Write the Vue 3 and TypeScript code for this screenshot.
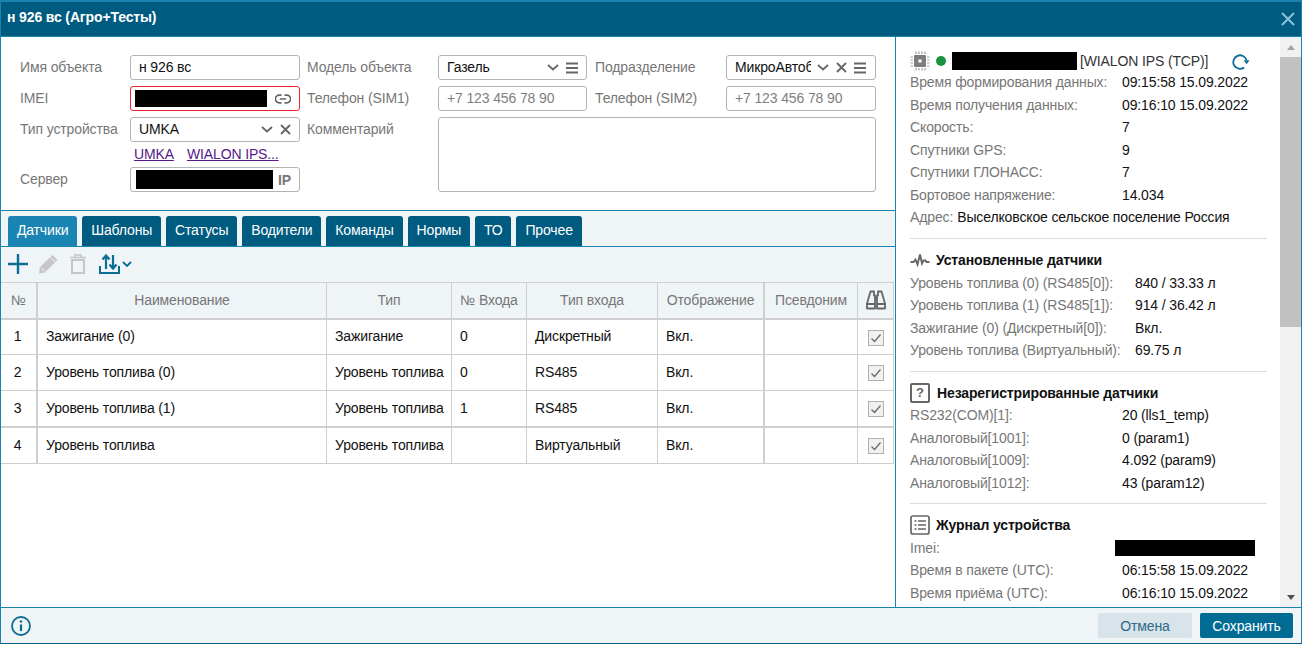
<script setup lang="ts">
interface SensorRow {
  id: number
  name: string
  type: string
  input: string
  inputType: string
  display: string
}

interface InfoRow {
  label: string
  value: string
}

const tabs = ['Датчики', 'Шаблоны', 'Статусы', 'Водители', 'Команды', 'Нормы', 'ТО', 'Прочее']

const columns = ['№', 'Наименование', 'Тип', '№ Входа', 'Тип входа', 'Отображение', 'Псевдоним']

const sensors: SensorRow[] = [
  { id: 1, name: 'Зажигание (0)', type: 'Зажигание', input: '0', inputType: 'Дискретный', display: 'Вкл.' },
  { id: 2, name: 'Уровень топлива (0)', type: 'Уровень топлива', input: '0', inputType: 'RS485', display: 'Вкл.' },
  { id: 3, name: 'Уровень топлива (1)', type: 'Уровень топлива', input: '1', inputType: 'RS485', display: 'Вкл.' },
  { id: 4, name: 'Уровень топлива', type: 'Уровень топлива', input: '', inputType: 'Виртуальный', display: 'Вкл.' }
]

const deviceRows: InfoRow[] = [
  { label: 'Время формирования данных:', value: '09:15:58 15.09.2022' },
  { label: 'Время получения данных:', value: '09:16:10 15.09.2022' },
  { label: 'Скорость:', value: '7' },
  { label: 'Спутники GPS:', value: '9' },
  { label: 'Спутники ГЛОНАСС:', value: '7' },
  { label: 'Бортовое напряжение:', value: '14.034' }
]

const installedRows: InfoRow[] = [
  { label: 'Уровень топлива (0) (RS485[0]):', value: '840 / 33.33 л' },
  { label: 'Уровень топлива (1) (RS485[1]):', value: '914 / 36.42 л' },
  { label: 'Зажигание (0) (Дискретный[0]):', value: 'Вкл.' },
  { label: 'Уровень топлива (Виртуальный):', value: '69.75 л' }
]

const unknownRows: InfoRow[] = [
  { label: 'RS232(COM)[1]:', value: '20 (lls1_temp)' },
  { label: 'Аналоговый[1001]:', value: '0 (param1)' },
  { label: 'Аналоговый[1009]:', value: '4.092 (param9)' },
  { label: 'Аналоговый[1012]:', value: '43 (param12)' }
]

const logRows: InfoRow[] = [
  { label: 'Время в пакете (UTC):', value: '06:15:58 15.09.2022' },
  { label: 'Время приёма (UTC):', value: '06:16:10 15.09.2022' }
]
</script>

<template>
  <div class="window">
    <header class="title-bar">
      <span class="title">н 926 вс (Агро+Тесты)</span>
      <svg class="close" width="14" height="14" viewBox="0 0 14 14">
        <path d="M1 1l12 12M13 1L1 13" stroke="#8cc3d8" stroke-width="2" fill="none" />
      </svg>
    </header>

    <div class="body">
      <main class="main">
        <section class="form">
          <label class="lbl">Имя объекта</label>
          <input class="field" value="н 926 вс" readonly />
          <label class="lbl lbl-mid">Модель объекта</label>
          <div class="field box">
            <span class="box-text">Газель</span>
            <svg class="ic-chevron" width="12" height="7" viewBox="0 0 12 7"><path d="M1 1l5 4.5L11 1" stroke="#666" stroke-width="1.8" fill="none" /></svg>
            <svg class="ic-menu" width="12" height="12" viewBox="0 0 12 12"><path d="M0 1.5h12M0 6h12M0 10.5h12" stroke="#666" stroke-width="2" /></svg>
          </div>
          <label class="lbl lbl-right">Подразделение</label>
          <div class="field box">
            <span class="box-text box-clip">МикроАвтоб</span>
            <svg class="ic-chevron" width="12" height="7" viewBox="0 0 12 7"><path d="M1 1l5 4.5L11 1" stroke="#666" stroke-width="1.8" fill="none" /></svg>
            <svg class="ic-x" width="11" height="11" viewBox="0 0 11 11"><path d="M1 1l9 9M10 1l-9 9" stroke="#666" stroke-width="1.8" fill="none" /></svg>
            <svg class="ic-menu" width="12" height="12" viewBox="0 0 12 12"><path d="M0 1.5h12M0 6h12M0 10.5h12" stroke="#666" stroke-width="2" /></svg>
          </div>

          <label class="lbl">IMEI</label>
          <div class="field box box-error">
            <span class="redact redact-imei"></span>
            <svg class="ic-link" width="16" height="10" viewBox="0 0 16 10">
              <path d="M6.5 1.2H4.2a3.8 3.8 0 0 0 0 7.6h2.3M9.5 1.2h2.3a3.8 3.8 0 0 1 0 7.6H9.5M4.8 5h6.4" stroke="#666" stroke-width="1.7" fill="none" />
            </svg>
          </div>
          <label class="lbl lbl-mid">Телефон (SIM1)</label>
          <input class="field" placeholder="+7 123 456 78 90" />
          <label class="lbl lbl-right">Телефон (SIM2)</label>
          <input class="field" placeholder="+7 123 456 78 90" />

          <label class="lbl">Тип устройства</label>
          <div class="field box">
            <span class="box-text">UMKA</span>
            <svg class="ic-chevron" width="12" height="7" viewBox="0 0 12 7"><path d="M1 1l5 4.5L11 1" stroke="#666" stroke-width="1.8" fill="none" /></svg>
            <svg class="ic-x" width="11" height="11" viewBox="0 0 11 11"><path d="M1 1l9 9M10 1l-9 9" stroke="#666" stroke-width="1.8" fill="none" /></svg>
          </div>
          <label class="lbl lbl-mid">Комментарий</label>
          <textarea class="field comment"></textarea>

          <div class="links">
            <a href="#umka">UMKA</a>
            <a href="#wialon">WIALON IPS...</a>
          </div>

          <label class="lbl lbl-server">Сервер</label>
          <div class="field box box-server">
            <span class="redact redact-server"></span>
            <span class="ip">IP</span>
          </div>
        </section>

        <nav class="tabs">
          <span v-for="(tab, i) in tabs" :key="tab" class="tab" :class="{ active: i === 0 }">{{ tab }}</span>
        </nav>

        <div class="toolbar">
          <svg class="tool-plus" width="20" height="20" viewBox="0 0 20 20"><path d="M10 0v20M0 10h20" stroke="#0b6c94" stroke-width="2.4" /></svg>
          <svg class="tool-edit" width="20" height="20" viewBox="0 0 20 20">
            <path d="M14.5 1L19.5 6 7 18.5 1 19.5 2 13z" fill="#c6c6c6" />
            <path d="M12.5 3.5l4.5 4.5M3 13.5l4 4" stroke="#eff4f7" stroke-width="1" fill="none" />
          </svg>
          <svg class="tool-trash" width="16" height="20" viewBox="0 0 16 20">
            <path d="M0 3.5h16M5 3V1h6v2" stroke="#c6c6c6" stroke-width="1.6" fill="none" />
            <rect x="2" y="6" width="12" height="13" fill="none" stroke="#c6c6c6" stroke-width="2" />
          </svg>
          <svg class="tool-transfer" width="34" height="20" viewBox="0 0 34 20">
            <path d="M1 12v7h19v-7" stroke="#0b6c94" stroke-width="2" fill="none" />
            <path d="M7 15V2M3.5 5.5L7 1.5l3.5 4M14 1v13M10.5 10.5l3.5 4 3.5-4" stroke="#0b6c94" stroke-width="2.2" fill="none" />
            <path d="M24 8l4 4 4-4" stroke="#0b6c94" stroke-width="1.8" fill="none" />
          </svg>
        </div>

        <table class="grid">
          <colgroup>
            <col class="c-num" />
            <col class="c-name" />
            <col class="c-type" />
            <col class="c-input" />
            <col class="c-itype" />
            <col class="c-disp" />
            <col class="c-alias" />
            <col class="c-check" />
          </colgroup>
          <thead>
            <tr>
              <th v-for="col in columns" :key="col">{{ col }}</th>
              <th>
                <svg class="binoculars" width="20" height="20" viewBox="0 0 20 20">
                  <path d="M4.5 1.5h3.5v4H9v13H1v-5zM15.5 1.5H12v4h-1v13h8v-5z" fill="none" stroke="#666" stroke-width="1.8" stroke-linejoin="round" />
                  <path d="M1 14h8M11 14h8M9 8h2" stroke="#666" stroke-width="1.8" />
                </svg>
              </th>
            </tr>
          </thead>
          <tbody>
            <tr v-for="row in sensors" :key="row.id">
              <td class="num">{{ row.id }}</td>
              <td>{{ row.name }}</td>
              <td>{{ row.type }}</td>
              <td>{{ row.input }}</td>
              <td>{{ row.inputType }}</td>
              <td>{{ row.display }}</td>
              <td></td>
              <td class="check-cell">
                <span class="check">
                  <svg width="14" height="14" viewBox="0 0 14 14"><path d="M2.5 7.5l3 3 6-7" stroke="#666" stroke-width="1.2" fill="none" /></svg>
                </span>
              </td>
            </tr>
          </tbody>
        </table>
      </main>

      <aside class="info">
        <section class="info-block first">
          <div class="device-head">
            <svg class="ic-chip" width="20" height="20" viewBox="0 0 20 20">
              <rect x="4" y="4" width="12" height="12" rx="1" fill="#7d7d7d" />
              <rect x="8.5" y="8.5" width="3" height="3" fill="#fff" />
              <path d="M6 0.5v2.5M9 0.5v2.5M12 0.5v2.5M15 0.5v2.5M6 17v2.5M9 17v2.5M12 17v2.5M15 17v2.5M0.5 6H3M0.5 9H3M0.5 12H3M0.5 15H3M17 6h2.5M17 9h2.5M17 12h2.5M17 15h2.5" stroke="#a0a0a0" stroke-width="1.2" />
            </svg>
            <span class="dot"></span>
            <span class="redact redact-name"></span>
            <span class="proto">[WIALON IPS (TCP)]</span>
            <svg class="ic-refresh" width="18" height="17" viewBox="0 0 20 19">
              <path d="M13.5 16.3A7.6 7.6 0 1 1 16.3 8" stroke="#0b6c94" stroke-width="2" fill="none" />
              <path d="M13 8h6.5l-3.2 4.5z" fill="#0b6c94" />
            </svg>
          </div>
          <div v-for="row in deviceRows" :key="row.label" class="info-row">
            <span class="k">{{ row.label }}</span>
            <span class="v">{{ row.value }}</span>
          </div>
          <div class="address">
            <span class="k-inline">Адрес:</span>
            <span class="v">Выселковское сельское поселение Россия</span>
          </div>
        </section>

        <section class="info-block wide">
          <h3 class="block-title">
            <svg width="20" height="14" viewBox="0 0 20 14">
              <path d="M0.5 9h3l2-2.5 2 5 2.5-10 2 9 1.5-3h2l1 1.5h3" stroke="#666" stroke-width="1.9" fill="none" />
            </svg>
            Установленные датчики
          </h3>
          <div v-for="row in installedRows" :key="row.label" class="info-row">
            <span class="k">{{ row.label }}</span>
            <span class="v">{{ row.value }}</span>
          </div>
        </section>

        <section class="info-block">
          <h3 class="block-title">
            <span class="ic-help">?</span>
            Незарегистрированные датчики
          </h3>
          <div v-for="row in unknownRows" :key="row.label" class="info-row">
            <span class="k">{{ row.label }}</span>
            <span class="v">{{ row.value }}</span>
          </div>
        </section>

        <section class="info-block last">
          <h3 class="block-title">
            <svg width="20" height="20" viewBox="0 0 20 20">
              <rect x="1" y="1" width="18" height="18" rx="2" fill="none" stroke="#666" stroke-width="1.7" />
              <path d="M4.5 6h2M8 6h8M4.5 10h2M8 10h8M4.5 14h2M8 14h8" stroke="#666" stroke-width="1.7" />
            </svg>
            Журнал устройства
          </h3>
          <div class="info-row imei-row">
            <span class="k">Imei:</span>
            <span class="redact redact-log"></span>
          </div>
          <div v-for="row in logRows" :key="row.label" class="info-row">
            <span class="k">{{ row.label }}</span>
            <span class="v">{{ row.value }}</span>
          </div>
        </section>
      </aside>

      <div class="scrollbar">
        <span class="arrow arrow-up"></span>
        <span class="thumb"></span>
        <span class="track-rest"></span>
        <span class="arrow arrow-down"></span>
      </div>
    </div>

    <footer class="footer">
      <svg width="20" height="20" viewBox="0 0 20 20">
        <circle cx="10" cy="10" r="9" fill="none" stroke="#0b6c94" stroke-width="1.8" />
        <path d="M10 8.5V15" stroke="#0b6c94" stroke-width="2.2" />
        <circle cx="10" cy="5.5" r="1.3" fill="#0b6c94" />
      </svg>
      <div class="actions">
        <button class="btn btn-cancel">Отмена</button>
        <button class="btn btn-save">Сохранить</button>
      </div>
    </footer>
  </div>
</template>

<style>
html,
body {
  margin: 0;
  background: #fff;
  overflow: hidden;
}
</style>

<style scoped>
.window {
  box-sizing: border-box;
  display: flex;
  flex-direction: column;
  width: 1302px;
  height: 644px;
  border: 1px solid #1a82ae;
  border-top-width: 2px;
  border-bottom-color: #005b80;
  font: 14px "Liberation Sans", Arial, sans-serif;
  letter-spacing: -0.13px;
  color: #111;
  background: #fff;
}

.title-bar {
  box-sizing: border-box;
  flex: 0 0 35px;
  display: flex;
  align-items: center;
  justify-content: space-between;
  padding: 0 6px 4px 6px;
  background: #005b80;
  border-bottom: 1px solid #1a82ae;
  color: #fff;
}

.title {
  font-weight: bold;
}

.close {
  margin-top: 4px;
}

.body {
  flex: 1;
  display: flex;
  min-height: 0;
}

.main {
  box-sizing: border-box;
  flex: 0 0 895px;
  border-right: 1px solid #1a82ae;
  display: flex;
  flex-direction: column;
}

.form {
  box-sizing: border-box;
  flex: 0 0 174px;
  display: grid;
  grid-template-columns: 110px 170px 138px 149px 139px 150px;
  grid-template-rows: 25px 25px 25px 13px 25px;
  row-gap: 6px;
  padding: 18px 0 0 19px;
  border-bottom: 1px solid #1a82ae;
}

.lbl {
  align-self: center;
  color: #777;
  white-space: nowrap;
  line-height: 25px;
}

.lbl-mid {
  padding-left: 7px;
}

.lbl-right {
  padding-left: 8px;
}

.lbl-server {
  grid-column: 1;
  grid-row: 5;
}

.field {
  box-sizing: border-box;
  width: 100%;
  height: 25px;
  margin: 0;
  padding: 0 8px 2px;
  border: 1px solid #b5b5b5;
  border-radius: 3px;
  background: #fff;
  font: inherit;
  letter-spacing: inherit;
  color: #111;
  outline: none;
}

.field::placeholder {
  color: #808080;
  opacity: 1;
}

.box {
  display: flex;
  align-items: center;
  padding-bottom: 0;
}

.box-text {
  flex: 1;
  min-width: 0;
  padding-bottom: 2px;
  white-space: nowrap;
}

.box-clip {
  flex: 0 0 76px;
  overflow: hidden;
  margin-right: 6px;
}

.box-error {
  border-color: #e8262b;
  padding-left: 4px;
}

.ic-chevron {
  flex: none;
}

.ic-x {
  flex: none;
  margin-left: 7px;
}

.ic-menu {
  flex: none;
  margin-left: 7px;
}

.ic-link {
  flex: none;
  margin-left: 8px;
}

.redact {
  display: block;
  background: #000;
}

.redact-imei {
  flex: 0 0 132px;
  height: 17px;
}

.redact-server {
  flex: 0 0 137px;
  height: 19px;
}

.redact-name {
  flex: 0 0 125px;
  height: 18px;
}

.redact-log {
  width: 140px;
  height: 16px;
  margin-left: -7px;
}

.comment {
  grid-column: 4 / 7;
  grid-row: 3 / 6;
  height: 75px;
  resize: none;
}

.links {
  grid-column: 2;
  grid-row: 4;
  display: flex;
  gap: 13px;
  padding-left: 4px;
  line-height: 13px;
}

.links a {
  color: #551a8b;
}

.box-server {
  grid-column: 2;
  grid-row: 5;
  padding: 0 8px 0 5px;
  justify-content: space-between;
}

.ip {
  font-weight: bold;
  color: #777;
}

.tabs {
  box-sizing: border-box;
  flex: 0 0 36px;
  display: flex;
  gap: 5px;
  padding: 5px 0 0 7px;
  background: #eff4f7;
  border-bottom: 1px solid #1a82ae;
}

.tab {
  padding: 0 8.9px;
  border-radius: 3px 3px 0 0;
  background: #005b80;
  color: #fff;
  line-height: 28px;
}

.tab.active {
  background: #1a84b2;
}

.toolbar {
  box-sizing: border-box;
  flex: 0 0 35px;
  display: flex;
  align-items: center;
  padding: 0 0 2px 7px;
  background: #eff4f7;
}

.tool-edit {
  margin-left: 10px;
}

.tool-trash {
  margin-left: 12px;
}

.tool-transfer {
  margin-left: 13px;
}

.grid {
  table-layout: fixed;
  width: 893px;
  border-collapse: separate;
  border-spacing: 0;
  border-top: 1px solid #cfcfcf;
}

.c-num { width: 37px; }
.c-name { width: 289px; }
.c-type { width: 125px; }
.c-input { width: 75px; }
.c-itype { width: 131px; }
.c-disp { width: 107px; }
.c-alias { width: 93px; }
.c-check { width: 36px; }

.grid th,
.grid td {
  box-sizing: border-box;
  padding: 0 0 2px 8px;
  border-right: 1px solid #cfcfcf;
  border-bottom: 1px solid #cfcfcf;
  text-align: left;
  font-weight: normal;
  white-space: nowrap;
  overflow: hidden;
}

.grid th {
  height: 37px;
  padding: 0 0 2px;
  text-align: center;
  color: #777;
  background: #eff4f7;
  border-bottom-width: 2px;
  vertical-align: middle;
}

.grid td {
  height: 36px;
}

.grid tbody tr:first-child td {
  height: 35px;
}

.grid tbody tr:nth-child(3) td {
  height: 37px;
  border-bottom-width: 2px;
}

.grid th:first-child,
.grid td:first-child,
.grid th:nth-child(6),
.grid td:nth-child(6) {
  border-right-width: 2px;
}

.grid td.num {
  padding: 0 2px 2px 0;
  text-align: center;
}

.grid td.check-cell {
  padding: 0 0 2px 1px;
  text-align: center;
}

.binoculars {
  display: block;
  margin: 0 auto;
}

.check {
  box-sizing: border-box;
  display: inline-flex;
  align-items: center;
  justify-content: center;
  width: 16px;
  height: 16px;
  margin-top: 3px;
  border: 1px solid #b0b0b0;
  background: #f1f1f1;
  vertical-align: middle;
}

.info {
  box-sizing: border-box;
  flex: 0 0 384px;
  overflow: hidden;
  padding: 0 13px 0 14px;
}

.info-block {
  padding: 9.5px 0 9px;
  border-bottom: 1px solid #dcdcdc;
}

.info-block.first {
  padding: 14px 0 9.5px;
}

.info-block.last {
  border-bottom: 0;
}

.device-head {
  display: flex;
  align-items: center;
  height: 20px;
}

.dot {
  flex: none;
  width: 10px;
  height: 10px;
  margin: 0 6px;
  border-radius: 50%;
  background: #17933f;
}

.proto {
  margin-left: 3px;
  color: #333;
  white-space: nowrap;
}

.ic-refresh {
  flex: none;
  margin-left: 24px;
}

.info-row {
  display: grid;
  grid-template-columns: 212px 1fr;
  align-items: center;
  height: 22.5px;
  line-height: 22.5px;
  white-space: nowrap;
}

.wide .info-row {
  grid-template-columns: 225px 1fr;
}

.k,
.k-inline {
  color: #777;
}

.address {
  height: 22.5px;
  line-height: 22.5px;
  white-space: nowrap;
}

.k-inline {
  margin-right: 4px;
}

.block-title {
  display: flex;
  align-items: center;
  gap: 6px;
  height: 23px;
  margin: 0;
  font-size: 14px;
  font-weight: bold;
  color: #111;
  white-space: nowrap;
}

.ic-help {
  box-sizing: border-box;
  flex: none;
  width: 20px;
  height: 20px;
  margin-right: 1px;
  border: 2px solid #666;
  border-radius: 2px;
  color: #666;
  text-align: center;
  line-height: 16px;
  font-size: 13px;
}

.scrollbar {
  flex: 0 0 21px;
  display: flex;
  flex-direction: column;
  background: #f1f1f1;
}

.arrow {
  flex: 0 0 20px;
  display: flex;
  justify-content: center;
  align-items: center;
}

.arrow::before {
  content: '';
  border-left: 4.5px solid transparent;
  border-right: 4.5px solid transparent;
}

.arrow-up::before {
  border-bottom: 5px solid #a3a3a3;
}

.arrow-down::before {
  border-top: 5px solid #505050;
}

.thumb {
  flex: 0 0 270px;
  background: #c1c1c1;
}

.track-rest {
  flex: 1;
}

.footer {
  box-sizing: border-box;
  flex: 0 0 36px;
  display: flex;
  align-items: center;
  justify-content: space-between;
  padding: 0 8px 0 10px;
  background: #eff4f7;
  border-top: 1px solid #1a82ae;
}

.actions {
  display: flex;
  gap: 8px;
}

.btn {
  height: 25px;
  padding: 0;
  border: 0;
  border-radius: 2px;
  font: inherit;
  letter-spacing: inherit;
}

.btn-cancel {
  width: 94px;
  background: #d8e4ea;
  color: #2a6a88;
}

.btn-save {
  width: 93px;
  background: #006c94;
  color: #fff;
}
</style>
